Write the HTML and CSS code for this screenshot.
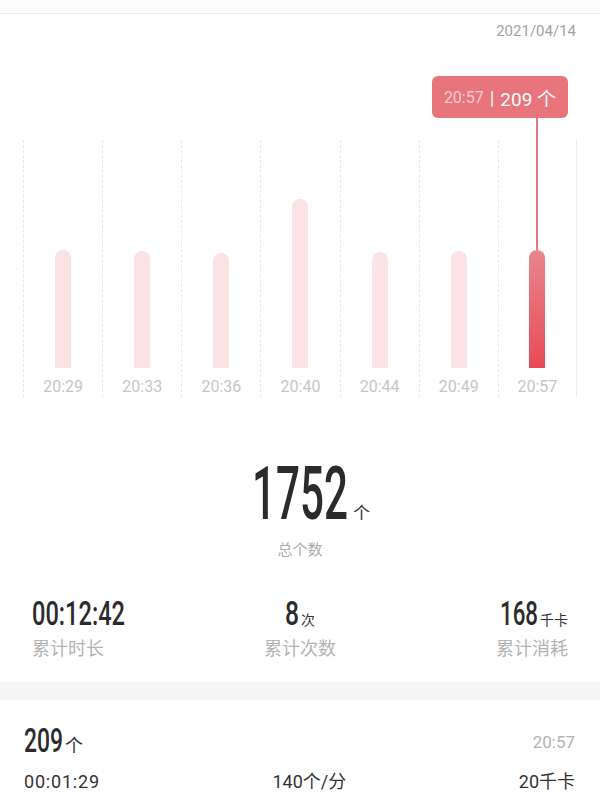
FILE: index.html
```html
<!DOCTYPE html>
<html lang="zh-CN">
<head>
    <meta charset="UTF-8">
    <meta name="viewport" content="width=device-width, initial-scale=1.0">
    <title>跳绳记录</title>
    <link rel="stylesheet" href="styles.css">
</head>
<body>
    <div class="topbar"></div>
    <div class="date">2021/04/14</div>

    <div class="chart">
        <div class="tip"><span class="tip-time">20:57</span><span class="tip-sep">|</span><span>209 个</span></div>

        <div class="col"><div class="bar" style="height:118px"></div><div class="label">20:29</div></div>
        <div class="col"><div class="bar" style="height:117px"></div><div class="label">20:33</div></div>
        <div class="col"><div class="bar" style="height:115px"></div><div class="label">20:36</div></div>
        <div class="col"><div class="bar" style="height:169px"></div><div class="label">20:40</div></div>
        <div class="col"><div class="bar" style="height:116px"></div><div class="label">20:44</div></div>
        <div class="col"><div class="bar" style="height:117px"></div><div class="label">20:49</div></div>
        <div class="col last"><div class="bar active" style="height:118px"></div><div class="label">20:57</div></div>
    </div>

    <div class="total">
        <div class="value">
            <svg class="cond xl" width="96" height="53" viewBox="0 0 96 53"><text x="0" y="53" textLength="96" lengthAdjust="spacingAndGlyphs">1752</text></svg>
            <span class="unit big-unit">个</span>
        </div>
        <div class="caption">总个数</div>
    </div>

    <div class="stats">
        <div class="stat left">
            <div class="value">
                <svg class="cond md" width="93" height="24" viewBox="0 0 93 24"><text x="0" y="24" textLength="93" lengthAdjust="spacingAndGlyphs">00:12:42</text></svg>
            </div>
            <div class="stat-label">累计时长</div>
        </div>
        <div class="stat mid">
            <div class="value">
                <svg class="cond md" width="14" height="24" viewBox="0 0 14 24"><text x="0" y="24" textLength="14" lengthAdjust="spacingAndGlyphs">8</text></svg>
                <span class="unit">次</span>
            </div>
            <div class="stat-label">累计次数</div>
        </div>
        <div class="stat right">
            <div class="value">
                <svg class="cond md" width="38" height="24" viewBox="0 0 38 24"><text x="0" y="24" textLength="38" lengthAdjust="spacingAndGlyphs">168</text></svg>
                <span class="unit">千卡</span>
            </div>
            <div class="stat-label">累计消耗</div>
        </div>
    </div>

    <div class="band"></div>

    <div class="record">
        <div class="record-top">
            <div class="value">
                <svg class="cond md" width="39" height="25" viewBox="0 0 39 25"><text x="0" y="25" textLength="39" lengthAdjust="spacingAndGlyphs">209</text></svg>
                <span class="unit rec-unit">个</span>
            </div>
            <div class="record-time">20:57</div>
        </div>
        <div class="record-bottom">
            <span class="rec-dur">00:01:29</span>
            <span>140个/分</span>
            <span>20千卡</span>
        </div>
    </div>
</body>
</html>
```

FILE: styles.css
```css
body {
    margin: 0;
    background-color: #fff;
    font-family: Roboto, "Noto Sans CJK SC", sans-serif;
    color: #333;
}
.topbar {
    height: 13px;
    background-color: #fcfcfc;
    border-bottom: 1px solid #efefef;
}
.date {
    margin-top: 7px;
    padding-right: 24px;
    text-align: right;
    font-size: 15px;
    line-height: 20px;
    color: #a3a3a3;
}

/* chart */
.chart {
    position: relative;
    display: grid;
    grid-template-columns: repeat(7, 1fr);
    height: 257px;
    margin: 99px 23px 0;
}
.col {
    display: flex;
    flex-direction: column;
    align-items: center;
    justify-content: flex-end;
    border-left: 1px dashed #e8e8e8;
}
.col.last {
    border-right: 1px solid #ececec;
}
.bar {
    position: relative;
    width: 16px;
    border-radius: 8px 8px 0 0;
    background-color: #fbe2e5;
}
.bar.active {
    background: linear-gradient(#e9868f, #e84a56);
}
.bar.active::before {
    content: "";
    position: absolute;
    bottom: 100%;
    left: 7px;
    width: 2px;
    height: 134px;
    background-color: #e8747c;
}
.label {
    margin-top: 9px;
    height: 20px;
    line-height: 20px;
    font-size: 16px;
    color: #c6c6c6;
}
.tip {
    position: absolute;
    top: -64px;
    right: 9px;
    width: 136px;
    height: 42px;
    display: flex;
    align-items: center;
    justify-content: center;
    gap: 6px;
    border-radius: 6px;
    background-color: #e8747c;
    color: #fff;
    font-size: 19px;
}
.tip-time {
    font-size: 16px;
    color: #f9cbce;
}

/* condensed numbers */
.cond {
    display: block;
    overflow: visible;
    fill: #2b2b2b;
    font-family: Roboto, sans-serif;
    font-weight: 500;
}
.cond.xl {
    font-size: 74px;
}
.cond.md {
    font-size: 34px;
}
.value {
    display: flex;
    align-items: baseline;
}
.unit {
    font-size: 14px;
    line-height: 1;
    color: #333;
}

.total {
    margin-top: 69px;
    text-align: center;
}
.total .value {
    justify-content: center;
    gap: 5px;
}
.big-unit {
    font-size: 17px;
    margin-right: -22px;
}
.caption {
    margin-top: 18px;
    font-size: 15px;
    line-height: 20px;
    color: #ababab;
}

.stats {
    display: grid;
    grid-template-columns: 1fr 1fr 1fr;
    margin-top: 41px;
    padding: 0 32px;
}
.stat {
    display: flex;
    flex-direction: column;
}
.stat.left {
    align-items: flex-start;
}
.stat.mid {
    align-items: center;
}
.stat.right {
    align-items: flex-end;
}
.stat .value {
    height: 27px;
    gap: 2px;
}
.stat-label {
    margin-top: 9px;
    font-size: 18px;
    line-height: 24px;
    color: #b3b3b3;
}

.band {
    height: 18px;
    margin-top: 21px;
    background-color: #f5f5f5;
}

.record {
    padding: 27px 25px 0 24px;
}
.record-top {
    display: flex;
    justify-content: space-between;
    align-items: flex-end;
}
.record-top .value {
    gap: 2px;
}
.rec-unit {
    font-size: 18px;
}
.record-time {
    font-size: 17px;
    color: #b3b3b3;
    margin-bottom: 3px;
}
.record-bottom {
    display: flex;
    justify-content: space-between;
    margin-top: 15px;
    font-size: 18px;
    line-height: 24px;
    color: #333;
}
.rec-dur {
    letter-spacing: 0.8px;
}
```
